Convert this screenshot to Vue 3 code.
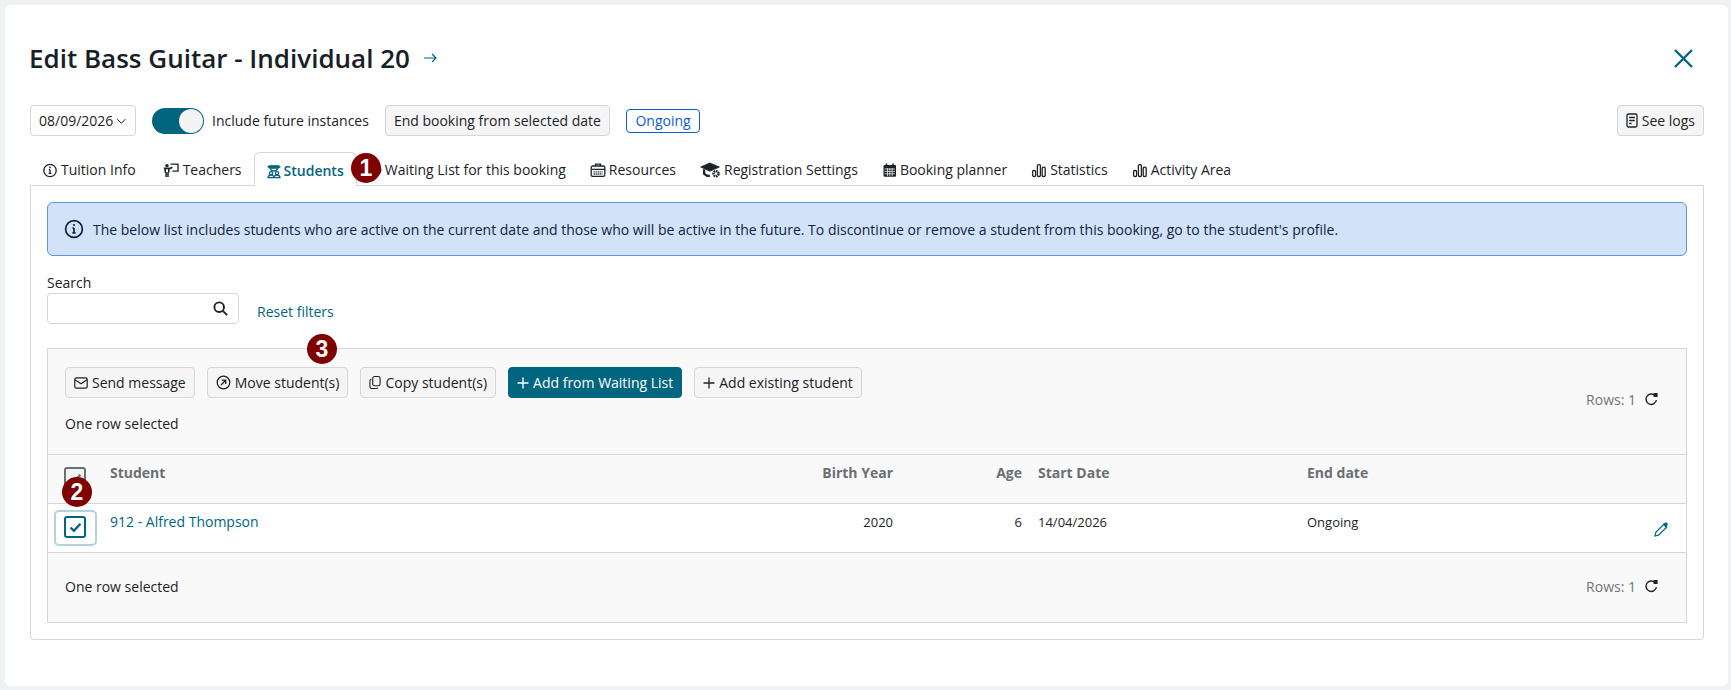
<script setup>
// w = room the icon takes in the tab row, vb = its drawing box
const tabs = [
  { label: 'Tuition Info', icon: 'info', w: 16, vb: '0 0 16 16' },
  { label: 'Teachers', icon: 'teacher', w: 20, vb: '-3 0 20 16' },
  { label: 'Students', icon: 'students', w: 14, vb: '1 1 14 14', active: true },
  { label: 'Waiting List for this booking', icon: 'waiting', w: 13, vb: '2 1 14 14' },
  { label: 'Resources', icon: 'resources', w: 16, vb: '0 0 16 16' },
  { label: 'Registration Settings', icon: 'registration', w: 21, vb: '-2 0 18 14' },
  { label: 'Booking planner', icon: 'calendar', w: 15, vb: '0 0 15 16' },
  { label: 'Statistics', icon: 'bars', w: 16, vb: '0 0 16 16' },
  { label: 'Activity Area', icon: 'bars', w: 16, vb: '0 0 16 16' },
]
</script>

<template>
  <div class="page">
    <main class="modal">
      <header class="title-row">
        <h1 class="title">Edit Bass Guitar - Individual 20</h1>
        <svg class="title-arrow" width="14" height="12" viewBox="0 0 14 12" fill="none" stroke="currentColor" stroke-width="1.2">
          <path d="M1 6h12M9 2l4 4-4 4" />
        </svg>
        <svg class="close" width="21" height="21" viewBox="0 0 21 21" fill="none" stroke="currentColor" stroke-width="2.4">
          <path d="M2 2l17 17M19 2L2 19" />
        </svg>
      </header>

      <div class="toolbar">
        <div class="date-select">
          08/09/2026
          <svg width="14" height="14" viewBox="0 0 14 14" fill="none" stroke="currentColor" stroke-width="1.3">
            <path d="M1.5 4.5L7 10l5.5-5.5" />
          </svg>
        </div>
        <div class="toggle"><span class="knob"></span></div>
        <span class="toggle-label">Include future instances</span>
        <button class="btn end-btn">End booking from selected date</button>
        <span class="status">Ongoing</span>
        <button class="btn logs-btn">
          <svg width="12" height="15" viewBox="0 0 12 15" fill="none" stroke="currentColor" stroke-width="1.3">
            <rect x="1" y="1" width="10" height="13" rx="1.5" />
            <path d="M3.2 4.5h5.6M3.2 7.5h5.6M3.2 10.5h2.4" />
          </svg>
          See logs
        </button>
      </div>

      <nav class="tabs">
        <div v-for="tab in tabs" :key="tab.label" class="tab" :class="{ active: tab.active }">
          <svg class="tab-icon" :width="tab.w" height="16" :viewBox="tab.vb" fill="none" stroke="currentColor" stroke-width="1.3">
            <template v-if="tab.icon === 'info'">
              <circle cx="8" cy="8.5" r="6.2" />
              <path d="M8 7.6v3.6M6.6 11.4h2.8M6.8 7.6H8" />
              <circle cx="8" cy="5.4" r=".9" fill="currentColor" stroke="none" />
            </template>
            <template v-else-if="tab.icon === 'teacher'">
              <circle cx="4" cy="3.6" r="1.7" fill="currentColor" stroke="none" />
              <path d="M.8 6.4h6.4l2.2-1.2M2.2 6.4V10.5M5.8 6.4V10.5" stroke-width="1.6" />
              <path d="M3.1 10v5M5 10v5" stroke-width="1.5" />
              <path d="M7.5 2.2H15v7H9.5" />
            </template>
            <template v-else-if="tab.icon === 'students'">
              <path d="M3 2.6h10l1.4 1.4-2 1.4h-8.8l-2-1.4z" fill="currentColor" stroke-width=".7" />
              <path d="M4.5 5.6c.5 2 2 2.4 3.5 2.4s3-.4 3.5-2.4" />
              <circle cx="5" cy="10.2" r="1.6" />
              <circle cx="11" cy="10.2" r="1.6" />
              <path d="M2 14.6c.3-1.9 1.6-2.6 3-2.6 1.2 0 2.2.5 3 1.6.8-1.1 1.8-1.6 3-1.6 1.4 0 2.7.7 3 2.6z" />
            </template>
            <template v-else-if="tab.icon === 'waiting'">
              <circle cx="9" cy="8" r="5.8" />
              <path d="M9 5v3.2l2 1.2" />
            </template>
            <template v-else-if="tab.icon === 'resources'">
              <rect x="1.2" y="4" width="13.6" height="10.4" rx="1.6" />
              <path d="M5.5 4V2.2h5V4M1.2 7.4h13.6" />
              <path d="M3.6 9.8h8.8M3.6 12h8.8" stroke-dasharray="1.2 .8" />
            </template>
            <template v-else-if="tab.icon === 'registration'">
              <path d="M-1.6 4.4L6.4.8l8.4 3.6-8.4 3.6z" fill="currentColor" stroke-width=".7" />
              <path d="M1.4 6.4v3.8c1.2 1.4 3 2 5 2" stroke-width="2" />
              <circle cx="11.8" cy="10.2" r="2.2" stroke-width="2.2" stroke-dasharray="1.4 .6" />
            </template>
            <template v-else-if="tab.icon === 'calendar'">
              <rect x="1.5" y="3" width="12.5" height="11.8" rx="1" fill="currentColor" stroke="none" />
              <path d="M4.5 1.5v2.5M11 1.5v2.5" stroke-width="1.5" />
              <path d="M2.5 7h10.5M2.5 9.4h10.5M2.5 11.8h10.5M5.5 6v8M7.8 6v8M10.2 6v8" stroke="#fff" stroke-width=".7" />
            </template>
            <template v-else>
              <rect x="1.6" y="8.5" width="3" height="6" rx="1.2" />
              <rect x="6.4" y="2.6" width="3" height="11.9" rx="1.2" />
              <rect x="11.2" y="5.2" width="3" height="9.3" rx="1.2" />
            </template>
          </svg>
          {{ tab.label }}
        </div>
      </nav>

      <section class="tab-panel">
        <div class="alert">
          <svg width="20" height="20" viewBox="0 0 20 20" fill="none" stroke="currentColor" stroke-width="1.7">
            <circle cx="10" cy="10" r="8.4" />
            <path d="M10 9v4.6M8.4 13.8h3.2M8.4 9H10" />
            <circle cx="10" cy="6" r="1.1" fill="currentColor" stroke="none" />
          </svg>
          The below list includes students who are active on the current date and those who will be active in the future. To discontinue or remove a student from this booking, go to the student's profile.
        </div>

        <div class="filters">
          <div class="search">
            <label class="search-label">Search</label>
            <div class="search-input">
              <svg width="15" height="15" viewBox="0 0 15 15" fill="none" stroke="currentColor" stroke-width="1.9">
                <circle cx="6.2" cy="6.2" r="4.8" />
                <path d="M9.8 9.8l4.4 4.4" />
              </svg>
            </div>
          </div>
          <a class="reset">Reset filters</a>
        </div>

        <div class="grid-box">
          <div class="grid-top">
            <div class="grid-actions">
              <div class="actions">
                <button class="btn">
                  <svg width="14" height="12" viewBox="0 0 14 12" fill="none" stroke="currentColor" stroke-width="1.2">
                    <rect x=".8" y=".8" width="12.4" height="10.4" rx="1.6" />
                    <path d="M1 2.8l6 4 6-4" />
                  </svg>
                  Send message
                </button>
                <button class="btn">
                  <svg width="15" height="15" viewBox="0 0 15 15" fill="none" stroke="currentColor" stroke-width="1.3">
                    <circle cx="7.5" cy="7.5" r="6.3" />
                    <path d="M5 10l4.6-4.6M5.8 5.2h3.9v3.9" />
                  </svg>
                  Move student(s)
                </button>
                <button class="btn">
                  <svg width="12" height="15" viewBox="0 0 13 15" fill="none" stroke="currentColor" stroke-width="1.2">
                    <rect x="4" y="1" width="8" height="10" rx="2" />
                    <path d="M2.5 3.6C1.5 4 1 4.6 1 5.6V12c0 1.2.8 2 2 2h5c.8 0 1.4-.4 1.6-1" />
                  </svg>
                  Copy student(s)
                </button>
                <button class="btn primary">
                  <svg width="12" height="12" viewBox="0 0 12 12" fill="none" stroke="currentColor" stroke-width="1.4">
                    <path d="M6 .5v11M.5 6h11" />
                  </svg>
                  Add from Waiting List
                </button>
                <button class="btn">
                  <svg width="12" height="12" viewBox="0 0 12 12" fill="none" stroke="currentColor" stroke-width="1.3">
                    <path d="M6 .5v11M.5 6h11" />
                  </svg>
                  Add existing student
                </button>
              </div>
              <p class="selected">One row selected</p>
            </div>
            <div class="rows">
              Rows: 1
              <svg width="15" height="14" viewBox="0 0 15 14" fill="none" stroke="#1c2227" stroke-width="1.4">
                <path d="M12.4 8A5.2 5.2 0 1 1 10.8 3.4" />
                <path d="M9.6 1h4v4h-4z" fill="#1c2227" stroke="none" />
              </svg>
            </div>
          </div>

          <div class="row head-row">
            <span class="check-cell">
              <span class="check head-check">
                <svg width="13" height="11" viewBox="0 0 12 10" fill="none" stroke="currentColor" stroke-width="2.2"><path d="M1.5 5l3 3 6-6.5" /></svg>
              </span>
            </span>
            <span>Student</span>
            <span class="num">Birth Year</span>
            <span class="num">Age</span>
            <span class="start">Start Date</span>
            <span>End date</span>
          </div>

          <div class="row body-row">
            <span class="check-cell">
              <span class="focus-ring"></span>
              <span class="check">
                <svg width="13" height="11" viewBox="0 0 12 10" fill="none" stroke="currentColor" stroke-width="2.2"><path d="M1.5 5l3 3 6-6.5" /></svg>
              </span>
            </span>
            <a class="student-link">912 - Alfred Thompson</a>
            <span class="num">2020</span>
            <span class="num">6</span>
            <span class="start">14/04/2026</span>
            <span class="end-cell">
              Ongoing
              <svg class="pencil" width="15" height="15" viewBox="0 0 15 15" fill="none" stroke="currentColor" stroke-width="1.2">
                <path d="M1 14l.8-3.6 8-8 2.8 2.8-8 8z" />
                <path d="M10.6 1.6c.8-.8 1.6-.8 2.2-.2s.6 1.4-.2 2.2l-1 1-2-2z" fill="currentColor" />
              </svg>
            </span>
          </div>

          <div class="grid-bottom">
            <p class="selected">One row selected</p>
            <div class="rows">
              Rows: 1
              <svg width="15" height="14" viewBox="0 0 15 14" fill="none" stroke="#1c2227" stroke-width="1.4">
                <path d="M12.4 8A5.2 5.2 0 1 1 10.8 3.4" />
                <path d="M9.6 1h4v4h-4z" fill="#1c2227" stroke="none" />
              </svg>
            </div>
          </div>
        </div>
      </section>

      <span class="marker marker-1">1</span>
      <span class="marker marker-2">2</span>
      <span class="marker marker-3">3</span>
    </main>
  </div>
</template>

<style>
html, body {
  margin: 0;
  background: #eef2f3;
}
</style>

<style scoped>
.page {
  height: 690px;
  padding: 5px 3px 4px 5px;
  box-sizing: border-box;
  font-family: 'Open Sans', sans-serif;
  font-size: 14px;
  color: #1c2227;
  overflow: hidden;
}

.modal {
  position: relative;
  height: 100%;
  box-sizing: border-box;
  background: #fff;
  border-radius: 6px;
  padding: 30px 24px 0 25px;
}

.title-row {
  display: flex;
  align-items: center;
  height: 46px;
}

.title {
  margin: 0 0 0 -1px;
  font-size: 26px;
  font-weight: 600;
  line-height: 46px;
  color: #172026;
}

.title-arrow {
  margin-left: 13px;
  color: #006680;
}

.close {
  margin-left: auto;
  margin-right: 10px;
  color: #006680;
}

.toolbar {
  display: flex;
  align-items: center;
  margin-top: 24px;
  height: 31px;
}

.date-select {
  display: flex;
  align-items: center;
  gap: 3px;
  height: 31px;
  box-sizing: border-box;
  width: 106px;
  padding: 0 8px;
  border: 1px solid #d4d6d8;
  border-radius: 4px;
  white-space: nowrap;
}

.toggle {
  width: 52px;
  height: 26px;
  margin-left: 16px;
  border-radius: 13px;
  background: #006680;
  position: relative;
}

.knob {
  position: absolute;
  right: 1px;
  top: 1px;
  width: 24px;
  height: 24px;
  border-radius: 50%;
  background: #f4f4f4;
}

.toggle-label {
  margin-left: 8px;
}

.btn {
  display: inline-flex;
  align-items: center;
  gap: 4px;
  height: 31px;
  box-sizing: border-box;
  padding: 0 8px;
  background: #f5f5f5;
  border: 1px solid #d4d6d8;
  border-radius: 4px;
  font: inherit;
  color: inherit;
  white-space: nowrap;
}

.btn.primary {
  background: #006680;
  border-color: #006680;
  color: #fff;
  font-weight: 500;
}

.end-btn {
  margin-left: 16px;
}

.status {
  margin-left: 16px;
  padding: 0 8.5px;
  height: 24px;
  line-height: 22px;
  box-sizing: border-box;
  border: 1px solid #0d5bd7;
  border-radius: 4px;
  color: #0d5bd7;
}

.logs-btn {
  margin-left: auto;
}

.tabs {
  display: flex;
  margin-top: 16px;
  height: 33px;
  position: relative;
  z-index: 1;
}

.tab {
  display: flex;
  align-items: center;
  gap: 3px;
  padding: 2px 12px 0;
  height: 31px;
  box-sizing: content-box;
  white-space: nowrap;
}

.tab.active {
  color: #006680;
  font-weight: 600;
  background: #fff;
  border: 1px solid #d4d6d8;
  border-bottom: 0;
  border-radius: 6px 6px 0 0;
  height: 34px;
  box-sizing: border-box;
}

.tab-panel {
  box-sizing: border-box;
  height: 455px;
  padding: 16px;
  border: 1px solid #d4d6d8;
  border-radius: 0 0 4px 4px;
}

.alert {
  display: flex;
  align-items: center;
  gap: 9px;
  height: 54px;
  box-sizing: border-box;
  padding: 0 16px;
  background: #d2e2f9;
  border: 1px solid #5a93e8;
  border-radius: 6px;
  color: #10233f;
}

.filters {
  display: flex;
  align-items: flex-end;
  margin-top: 17px;
  gap: 18px;
}

.search-label {
  display: block;
  line-height: 20px;
}

.search-input {
  display: flex;
  align-items: center;
  justify-content: flex-end;
  width: 192px;
  height: 31px;
  box-sizing: border-box;
  padding-right: 10px;
  border: 1px solid #d4d6d8;
  border-radius: 4px;
}

.reset {
  color: #006680;
  line-height: 20px;
  margin-bottom: 2px;
}

.grid-box {
  margin-top: 24px;
  border: 1px solid #d4d6d8;
  background: #f9f9f9;
}

.grid-top {
  display: flex;
  justify-content: space-between;
  height: 105px;
  box-sizing: border-box;
  padding: 18px 18px 0 17px;
}

.actions {
  display: flex;
  gap: 12px;
}

.selected {
  margin: 16px 0 0;
  line-height: 20px;
}

.rows {
  display: flex;
  align-items: center;
  gap: 8px;
  color: #6f767b;
  height: 20px;
  margin-top: 22px;
  margin-right: 9px;
}

.row {
  display: grid;
  grid-template-columns: 62px 1fr 120px 129px 285px 379px;
  border-top: 1px solid #d4d6d8;
  height: 49px;
  box-sizing: border-box;
}

.row > span, .row > a {
  padding-top: 8px;
  line-height: 20px;
}

.head-row {
  font-weight: 700;
  color: #6b6f73;
}

.body-row {
  background: #fff;
  font-size: 13px;
}

.row > .num {
  text-align: right;
}

.row > .start {
  padding-left: 16px;
}

.row > .check-cell {
  position: relative;
  padding: 0;
}

.check {
  position: absolute;
  left: 16px;
  top: 12px;
  width: 22px;
  height: 22px;
  box-sizing: border-box;
  display: flex;
  align-items: center;
  justify-content: center;
  border: 2px solid #006680;
  border-radius: 3px;
  background: #fff;
  color: #006680;
}

.head-check {
  border-color: #6b6f73;
  color: #6b6f73;
  background: #f2f2f2;
}

.focus-ring {
  position: absolute;
  left: 6px;
  top: 6px;
  width: 43px;
  height: 36px;
  box-sizing: border-box;
  border: 2px solid #b2d2dc;
  border-radius: 5px;
}

.student-link {
  color: #006680;
  font-size: 14px;
}

.row > .end-cell {
  display: flex;
  justify-content: space-between;
  padding-right: 17px;
}

.pencil {
  margin-top: 10px;
  color: #006680;
}

.grid-bottom {
  display: flex;
  justify-content: space-between;
  height: 70px;
  box-sizing: border-box;
  padding: 8px 18px 0 17px;
  border-top: 1px solid #d4d6d8;
}

.grid-bottom .rows {
  margin-top: 15px;
}

.marker {
  position: absolute;
  width: 30px;
  height: 30px;
  border-radius: 50%;
  background: #800000;
  color: #fff;
  font-family: 'Liberation Sans', sans-serif;
  font-weight: 700;
  font-size: 23px;
  line-height: 30px;
  text-align: center;
  z-index: 3;
}

.marker-1 {
  left: 346px;
  top: 148px;
}

.marker-2 {
  left: 57px;
  top: 472px;
}

.marker-3 {
  left: 302px;
  top: 329px;
}
</style>
